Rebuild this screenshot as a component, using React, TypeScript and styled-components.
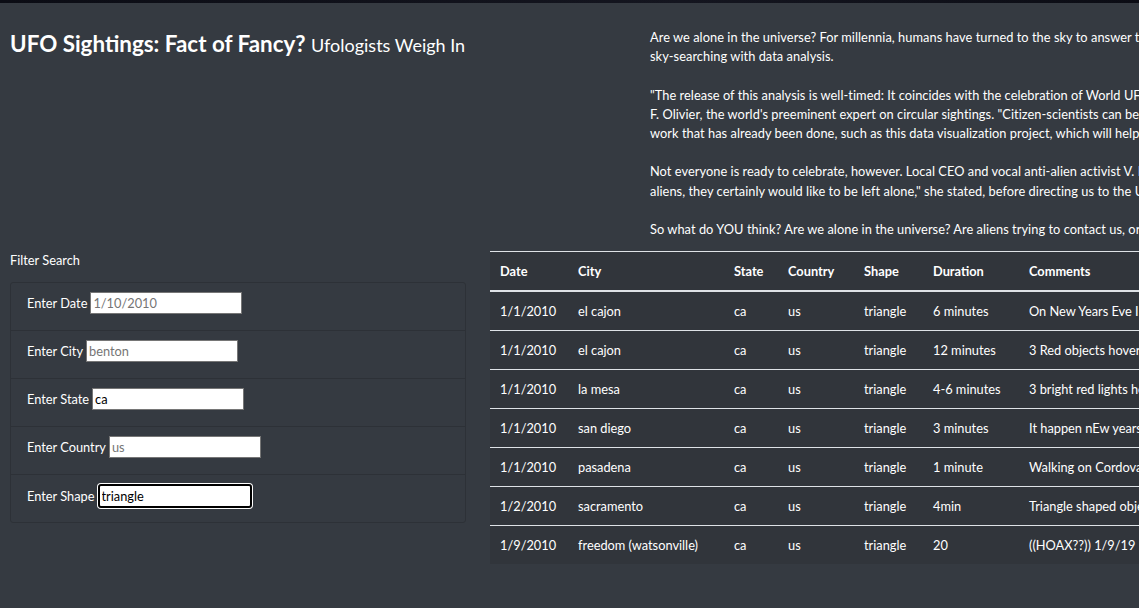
import React from "react";
import styled, { createGlobalStyle } from "styled-components";

const GlobalStyle = createGlobalStyle`
  html, body {
    margin: 0;
    padding: 0;
    background: #353a41;
  }
  body {
    font-family: Lato, "Noto Sans", "Liberation Sans", sans-serif;
    font-size: 12.8px;
    line-height: 19.2px;
    color: #fff;
  }
`;

const Page = styled.div`
  width: 1139px;
  height: 608px;
  overflow: hidden;
  background: #353a41;
`;

const TopStrip = styled.div`
  height: 3px;
  background: linear-gradient(90deg, #0b0c14, #14151f 60%, #0b0c14);
`;

const Header = styled.div`
  display: flex;
  padding: 25px 0 0 10px;
`;

const TitleCol = styled.div`
  width: 640px;
  flex: none;
`;

const Title = styled.h1`
  margin: 0;
  padding-top: 2px;
  font-size: 22.4px;
  line-height: 27px;
  font-weight: 700;
`;

const Subtitle = styled.small`
  font-size: 18px;
  font-weight: 400;
`;

const Story = styled.div`
  flex: none;
  width: 900px;
  letter-spacing: 0.05px;
`;

const Para = styled.p`
  margin: 0 0 19.2px;
  white-space: nowrap;
  &:last-child {
    margin-bottom: 0;
  }
`;

const Body = styled.div`
  display: flex;
  gap: 24px;
  margin-top: 12px;
  padding-left: 10px;
`;

const FilterCol = styled.div`
  width: 456px;
  flex: none;
`;

const FilterTitle = styled.div`
  margin-bottom: 12px;
`;

const FilterList = styled.ul`
  list-style: none;
  margin: 0;
  padding: 0;
  border: 1px solid #2d3137;
  border-radius: 3px;
`;

const FilterItem = styled.li`
  display: flex;
  align-items: baseline;
  height: 47px;
  box-sizing: border-box;
  padding: 9px 16px 0;
  border-top: 1px solid #2d3137;
  &:first-child {
    border-top: none;
    height: 47px;
  }
  & + & {
    height: 48px;
  }
`;

const Label = styled.label`
  margin-right: 3px;
`;

const Input = styled.input<{ $focused?: boolean }>`
  width: 152px;
  height: 22px;
  box-sizing: border-box;
  padding: 1px 2px;
  font: inherit;
  font-size: 12.8px;
  color: #000;
  background: #fff;
  border: 1px solid #767676;
  border-radius: 0;
  outline: none;
  &::placeholder {
    color: #757575;
  }
  ${({ $focused }) =>
    $focused &&
    `
    width: 154px;
    height: 24px;
    border: 2px solid #000;
    border-radius: 3px;
    box-shadow: 0 0 0 1px #fff;
    caret-color: #000;
  `}
`;

const TableWrap = styled.div`
  flex: none;
`;

const Table = styled.table`
  border-collapse: collapse;
  table-layout: fixed;
  background: #31353b;
  white-space: nowrap;
`;

const Th = styled.th`
  text-align: left;
  font-weight: 700;
  padding: 9.5px 10px;
  line-height: 19px;
  border-top: 1px solid #dee2e6;
  border-bottom: 2px solid #dee2e6;
`;

const Td = styled.td`
  padding: 9.5px 10px;
  line-height: 19px;
  overflow: hidden;
`;

const Tr = styled.tr`
  & + & td {
    border-top: 1px solid #dee2e6;
  }
`;

const columns = [
  { name: "Date", width: 78 },
  { name: "City", width: 156 },
  { name: "State", width: 54 },
  { name: "Country", width: 76 },
  { name: "Shape", width: 69 },
  { name: "Duration", width: 96 },
  { name: "Comments", width: 520 },
];

const sightings = [
  ["1/1/2010", "el cajon", "ca", "us", "triangle", "6 minutes", "On New Years Eve I was outside with my family and saw three lights"],
  ["1/1/2010", "el cajon", "ca", "us", "triangle", "12 minutes", "3 Red objects hovering in a triangle formation over the hills"],
  ["1/1/2010", "la mesa", "ca", "us", "triangle", "4-6 minutes", "3 bright red lights hovering in the night sky"],
  ["1/1/2010", "san diego", "ca", "us", "triangle", "3 minutes", "It happen nEw years eve right after midnight"],
  ["1/1/2010", "pasadena", "ca", "us", "triangle", "1 minute", "Walking on Cordova Street when I looked up and saw it"],
  ["1/2/2010", "sacramento", "ca", "us", "triangle", "4min", "Triangle shaped object with lights at each corner"],
  ["1/9/2010", "freedom (watsonville)", "ca", "us", "triangle", "20", "((HOAX??)) 1/9/19 Driving home I saw a triangle"],
];

const filters = [
  { label: "Enter Date", id: "datetime", placeholder: "1/10/2010" },
  { label: "Enter City", id: "city", placeholder: "benton" },
  { label: "Enter State", id: "state", placeholder: "ca", value: "ca" },
  { label: "Enter Country", id: "country", placeholder: "us" },
  { label: "Enter Shape", id: "shape", placeholder: "circle", value: "triangle", focused: true },
];

export default function App() {
  return (
    <Page>
      <GlobalStyle />
      <TopStrip />
      <Header>
        <TitleCol>
          <Title>
            UFO Sightings: Fact of Fancy? <Subtitle>Ufologists Weigh In</Subtitle>
          </Title>
        </TitleCol>
        <Story>
          <Para>
            Are we alone in the universe? For millennia, humans have turned to the sky to answer this question. Now, we can supplement our
            <br />
            sky-searching with data analysis.
          </Para>
          <Para>
            "The release of this analysis is well-timed: It coincides with the celebration of World UFO Day," says Dr. Ursula
            <br />
            F. Olivier, the world's preeminent expert on circular sightings. "Citizen-scientists can best contribute by studying the
            <br />
            work that has already been done, such as this data visualization project, which will help us find the truth."
          </Para>
          <Para>
            Not everyone is ready to celebrate, however. Local CEO and vocal anti-alien activist V. Isualize disagrees. "If there are
            <br />
            aliens, they certainly would like to be left alone," she stated, before directing us to the UFO sightings table below.
          </Para>
          <Para>
            So what do YOU think? Are we alone in the universe? Are aliens trying to contact us, or do they want to be left alone?
          </Para>
        </Story>
      </Header>
      <Body>
        <FilterCol>
          <FilterTitle>Filter Search</FilterTitle>
          <FilterList>
            {filters.map((f) => (
              <FilterItem key={f.id}>
                <Label htmlFor={f.id}>{f.label}</Label>
                <Input
                  id={f.id}
                  type="text"
                  placeholder={f.placeholder}
                  defaultValue={f.value}
                  $focused={f.focused}
                />
              </FilterItem>
            ))}
          </FilterList>
        </FilterCol>
        <TableWrap>
          <Table>
            <colgroup>
              {columns.map((c) => (
                <col key={c.name} style={{ width: c.width }} />
              ))}
            </colgroup>
            <thead>
              <tr>
                {columns.map((c) => (
                  <Th key={c.name}>{c.name}</Th>
                ))}
              </tr>
            </thead>
            <tbody>
              {sightings.map((row, i) => (
                <Tr key={i}>
                  {row.map((cell, j) => (
                    <Td key={j}>{cell}</Td>
                  ))}
                </Tr>
              ))}
            </tbody>
          </Table>
        </TableWrap>
      </Body>
    </Page>
  );
}
